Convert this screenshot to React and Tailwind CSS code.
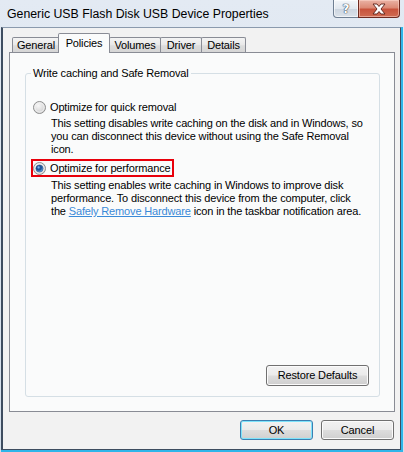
function Radio({ checked }) {
  return (
    <svg width="13" height="13" viewBox="0 0 13 13" className="shrink-0">
      <defs>
        <radialGradient id="rbg" cx="40%" cy="35%" r="65%">
          <stop offset="0" stopColor="#f7f7f7" />
          <stop offset="1" stopColor="#cfcfcf" />
        </radialGradient>
        <radialGradient id="rdot" cx="40%" cy="35%" r="65%">
          <stop offset="0" stopColor="#2c6bb8" />
          <stop offset="0.55" stopColor="#1b4f91" />
          <stop offset="1" stopColor="#6ab0ee" />
        </radialGradient>
      </defs>
      <circle cx="6.5" cy="6.5" r="6" fill="url(#rbg)" stroke="#8e8f8f" strokeWidth="1" />
      <circle cx="6.5" cy="6.5" r="4.6" fill="none" stroke="#f4f4f4" strokeWidth="0.8" />
      {checked && (
        <>
          <circle cx="6.5" cy="6.5" r="3.6" fill="url(#rdot)" stroke="#1d4378" strokeWidth="0.5" />
          <circle cx="5.6" cy="5.4" r="1.1" fill="#8cc6f5" opacity="0.8" />
        </>
      )}
    </svg>
  );
}

function VButton({ children, w, def }) {
  return (
    <div
      className={
        "flex items-center justify-center h-[21px] rounded-[3px] border text-black " +
        (def
          ? "border-[#3c7fb1] shadow-[inset_0_0_0_1px_#7ee3fb]"
          : "border-[#707070] shadow-[inset_0_0_0_1px_#fbfbfb]") +
        " bg-[linear-gradient(to_bottom,#f2f2f2_0%,#ebebeb_48%,#dddddd_52%,#cfcfcf_100%)] " +
        w
      }
    >
      <span className="leading-[13px]">{children}</span>
    </div>
  );
}

export default function App() {
  const tabs = [
    { label: "General", w: "w-[48px]", ml: "" },
    { label: "Policies", w: "w-[52px]", ml: "-ml-[2px]", sel: true },
    { label: "Volumes", w: "w-[52px]", ml: "-ml-px" },
    { label: "Driver", w: "w-[42px]", ml: "-ml-px" },
    { label: "Details", w: "w-[45px]", ml: "-ml-px" },
  ];
  return (
    <div className="w-[404px] h-[452px] overflow-hidden flex flex-col bg-[linear-gradient(to_bottom,#e3eaf3,#d3deea)] font-['Liberation_Sans',Arial,sans-serif] text-[11px] tracking-[-0.15px] text-black">
      {/* Title bar */}
      <div className="h-[27px] flex items-start shrink-0">
        <div className="flex-1 pl-[7px] pt-[6px] leading-[16px] text-[12.3px] tracking-normal whitespace-nowrap">
          Generic USB Flash Disk USB Device Properties
        </div>
        <div className="flex mr-[4px]">
          <div className="w-[26px] h-[18px] rounded-bl-[4px] border border-t-0 border-[#6f7f92] bg-[linear-gradient(to_bottom,#f3f6f9_0%,#e2e8ef_50%,#cdd6e0_55%,#dbe2ea_100%)] flex items-center justify-center shadow-[inset_0_0_0_1px_rgba(255,255,255,0.6)]">
            <span className="font-['DejaVu_Sans',sans-serif] font-bold text-[12px] leading-[14px] text-white [text-shadow:0_0_1px_#3a4656,0_0_1px_#3a4656,0_0_1px_#3a4656]">?</span>
          </div>
          <div className="w-[42px] h-[18px] -ml-px rounded-br-[4px] border border-t-0 border-[#6e2a20] bg-[linear-gradient(to_bottom,#eab3a5_0%,#dc8a76_45%,#c8533c_55%,#d06c52_100%)] flex items-center justify-center shadow-[inset_0_0_0_1px_rgba(255,220,210,0.5)]">
            <svg width="16" height="12" viewBox="0 0 16 12">
              <path
                d="M2 1 H6 L8 3.5 L10 1 H14 L10 6 L14 11 H10 L8 8.5 L6 11 H2 L6 6 Z"
                fill="#ffffff"
                stroke="#5a1f17"
                strokeWidth="0.9"
                strokeLinejoin="round"
              />
            </svg>
          </div>
        </div>
      </div>
      {/* frame */}
      <div className="flex-1 mx-px border-r-2 border-b-2 border-[#2fb5e9] flex">
        <div className="flex-1 flex flex-col bg-[#f2f2f2] border-l-2 border-r border-b border-t border-l-[#3e4d60] border-r-[#3e4d60] border-b-[#3e4d60] border-t-[#8b9aad]">
          {/* tabs */}
          <div className="mt-[5px] ml-[6px] mr-[5px] flex flex-col">
            <div className="h-[19px] flex items-end pl-[3px]">
              {tabs.map((t) =>
                t.sel ? (
                  <div
                    key={t.label}
                    className={
                      "relative z-10 h-[20px] -mb-px bg-[#fafbfb] border border-b-0 border-[#898c95] rounded-t-[2px] flex justify-center pt-[2px] leading-[14px] " +
                      t.w +
                      " " +
                      t.ml
                    }
                  >
                    {t.label}
                  </div>
                ) : (
                  <div
                    key={t.label}
                    className={
                      "h-[15px] border border-b-0 border-[#898c95] rounded-t-[2px] bg-[linear-gradient(to_bottom,#f4f4f4,#e8e8e8_50%,#dcdcdc_55%,#d6d6d6)] flex justify-center leading-[14px] " +
                      t.w +
                      " " +
                      t.ml
                    }
                  >
                    {t.label}
                  </div>
                )
              )}
            </div>
            {/* panel */}
            <div className="h-[360px] border border-[#898c95] bg-[#fafbfb] flex flex-col">
              <div className="relative mt-[20px] ml-[15px] mr-[14px] mb-[14px] flex-1 border border-[#d5dfe5] rounded-[3px] flex flex-col">
                <span className="absolute left-[5px] -top-[7px] px-[2px] bg-[#fafbfb] leading-[13px]">
                  Write caching and Safe Removal
                </span>
                <div className="mt-[27px] ml-[7px] flex items-center h-[13px] gap-[4px]">
                  <Radio />
                  <span className="leading-[13px] whitespace-nowrap">Optimize for quick removal</span>
                </div>
                <div className="mt-[3px] ml-[25px] leading-[13px] whitespace-nowrap">
                  <div>This setting disables write caching on the disk and in Windows, so</div>
                  <div>you can disconnect this device without using the Safe Removal</div>
                  <div>icon.</div>
                </div>
                <div className="mt-[3px] ml-[5px] self-start h-[18px] border-2 border-[#e8000b] flex items-center gap-[4px] pr-[1px]">
                  <Radio checked />
                  <span className="leading-[13px] whitespace-nowrap">Optimize for performance</span>
                </div>
                <div className="mt-[2px] ml-[25px] leading-[13px] whitespace-nowrap">
                  <div>This setting enables write caching in Windows to improve disk</div>
                  <div>performance. To disconnect this device from the computer, click</div>
                  <div>
                    the <span className="text-[#3a8ad8] underline">Safely Remove Hardware</span> icon in the taskbar notification area.
                  </div>
                </div>
                <div className="mt-auto flex justify-end pr-[10px] pb-[10px]">
                  <VButton w="w-[103px]">Restore Defaults</VButton>
                </div>
              </div>
            </div>
          </div>
          {/* bottom buttons */}
          <div className="mt-[8px] mr-[6px] flex justify-end gap-[8px]">
            <div className="h-[20px]">
              <VButton w="w-[73px] !h-[20px]" def>
                OK
              </VButton>
            </div>
            <div className="h-[20px]">
              <VButton w="w-[73px] !h-[20px]">Cancel</VButton>
            </div>
          </div>
        </div>
      </div>
    </div>
  );
}
